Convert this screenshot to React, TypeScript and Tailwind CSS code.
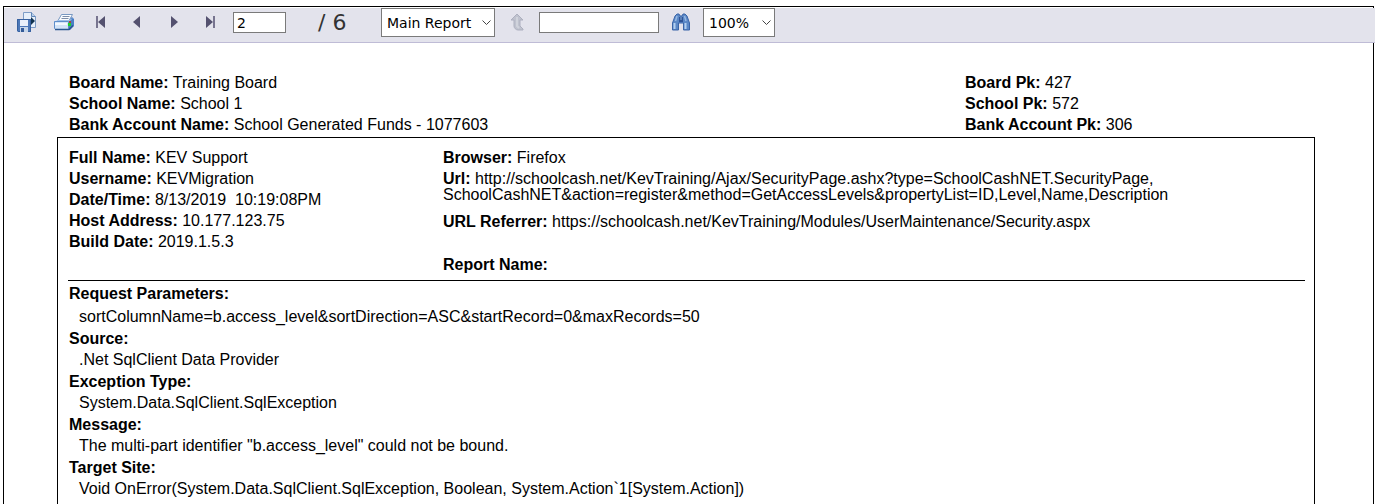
import type { ReactNode } from "react";

const toolbarFont = "font-['Verdana','DejaVu_Sans',sans-serif]";

function SaveIcon() {
  return (
    <svg width="22" height="22" viewBox="0 0 22 22" aria-hidden="true">
      <path d="M7.5 1.5h8l4 4v11h-12z" fill="#e6effa" stroke="#7d9cc6" />
      <path d="M15.500 1.500v4h4" fill="#b9cfe9" stroke="#5f85b8" />
      <path d="M15 6l4 4-4 4z" fill="#10334f" />
      <path d="M11 9h4v2h-4z" fill="#10334f" />
      <path d="M1 8h14v13H2l-1-1z" fill="#4d78b8" />
      <path d="M1.500 8.500h13v12h-12l-1-1z" fill="none" stroke="#36609f" />
      <rect x="4" y="9" width="8" height="6" fill="#e9f0fa" />
      <rect x="4" y="16" width="8" height="5" fill="#c6d6ea" />
      <rect x="5" y="17" width="3" height="4" fill="#345b98" />
    </svg>
  );
}

function PrintIcon() {
  return (
    <svg width="22" height="18" viewBox="0 0 22 18" aria-hidden="true">
      <path d="M14 8l5-4 2 2v7l-4 4h-3z" fill="#4a7fc4" />
      <path d="M8.500 1.500h11l-4 7h-11z" fill="#fbfdff" stroke="#7898c2" />
      <path d="M9.500 3.500h7M8.500 5.500h7" stroke="#7c8da8" />
      <path d="M1 9l4-2h11l4-2-4 4z" fill="#9fc0e8" />
      <path d="M1.500 8.500h14v7l-1 1h-12l-1-1z" fill="#d3e4f8" stroke="#5e8ecb" />
      <path d="M2 10h12v2H2z" fill="#f2f8ff" />
      <path d="M2 16.500h14l4-4" fill="none" stroke="#2a568f" strokeWidth="1.500" />
      <rect x="16" y="8" width="2" height="2" fill="#a3483f" />
      <rect x="15" y="10" width="3" height="3" fill="#1fd02f" />
    </svg>
  );
}

function UpIcon() {
  return (
    <svg width="16" height="18" viewBox="0 0 16 18" aria-hidden="true">
      <path d="M8 1l6 6h-3v6l3 3v1H9c-2 0-4-2-4-4V7H2z" fill="#bfc2ce" stroke="#adb0bf" strokeLinejoin="round" />
      <path d="M8 4v9l2 2" fill="none" stroke="#d0d3dc" strokeWidth="2" />
    </svg>
  );
}

function BinocularsIcon() {
  return (
    <svg width="18" height="18" viewBox="0 0 18 18" aria-hidden="true">
      <path
        d="M3 3l2-2h2l1 2h2l1-2h2l2 2 2.500 7v7H11.500v-7h-5v7H.500v-7z"
        fill="#5b88c6"
        stroke="#3a65a8"
        strokeLinejoin="round"
      />
      <path d="M2.500 10v6M13.500 10v6" stroke="#b3d0f0" strokeWidth="2" />
      <path d="M5 3L3.500 8M12.500 3l1.500 5" stroke="#96b9e4" strokeWidth="1.500" />
      <path d="M7 4h4v5H7z" fill="#2f5496" />
      <path d="M8.500 4h1v3h-1z" fill="#83a9da" />
    </svg>
  );
}

function NavIcon({ arrow, bar }: { arrow: string; bar?: string }) {
  return (
    <svg width="12" height="12" viewBox="0 0 12 12" aria-hidden="true">
      <path d={arrow} fill="#54516f" />
      {bar && <path d={bar} fill="#77748f" />}
    </svg>
  );
}

function ToolButton({ label, children }: { label: string; children: ReactNode }) {
  return (
    <button type="button" aria-label={label} className="flex h-7 w-[37px] items-center justify-center">
      {children}
    </button>
  );
}

function ToolSelect({ label, options, width }: { label: string; options: string[]; width: string }) {
  return (
    <div className={`relative ${width}`}>
      <select
        aria-label={label}
        className="h-[29px] w-full appearance-none border border-[#7a7a7a] bg-white pl-[5px] text-sm text-black"
      >
        {options.map((option) => (
          <option key={option}>{option}</option>
        ))}
      </select>
      <svg
        className="pointer-events-none absolute top-3 right-1"
        width="9"
        height="6"
        viewBox="0 0 9 6"
        fill="none"
        stroke="#444"
        aria-hidden="true"
      >
        <path d="M.5.5l4 4 4-4" />
      </svg>
    </div>
  );
}

function Toolbar() {
  return (
    <div
      className={`mt-px -mr-0.5 flex h-[35px] items-start border-b border-[#bfbcd6] bg-[#e3e3ec] pl-1 ${toolbarFont}`}
    >
      <ToolButton label="Export this report"><SaveIcon /></ToolButton>
      <ToolButton label="Print this report"><PrintIcon /></ToolButton>
      <ToolButton label="First page"><NavIcon arrow="M10 0L3 6l7 6z" bar="M1 0h2v12H1z" /></ToolButton>
      <ToolButton label="Previous page"><NavIcon arrow="M8 0L1 6l7 6z" /></ToolButton>
      <ToolButton label="Next page"><NavIcon arrow="M2 0l7 6-7 6z" /></ToolButton>
      <ToolButton label="Last page"><NavIcon arrow="M0 0l7 6-7 6z" bar="M7 0h2v12H7z" /></ToolButton>
      <input
        aria-label="Page"
        defaultValue="2"
        className="mt-1 ml-[3px] h-[21px] w-[53px] border border-[#7a7a7a] bg-white px-[3px] text-sm text-black"
      />
      <span className="ml-8 w-[63px] text-[22px] leading-[30px] text-[#333]">/ 6</span>
      <ToolSelect label="Report" options={["Main Report"]} width="w-[114px]" />
      <button type="button" aria-label="Parent report" disabled className="flex h-7 w-11 items-center justify-center">
        <UpIcon />
      </button>
      <input aria-label="Find text" className="mt-1 h-[21px] w-[120px] border border-[#7a7a7a] bg-white px-[3px] text-sm" />
      <button type="button" aria-label="Find" className="flex h-7 w-11 items-center justify-center">
        <BinocularsIcon />
      </button>
      <ToolSelect label="Zoom" options={["100%"]} width="w-[72px]" />
    </div>
  );
}

function Field({ label, children }: { label: string; children?: ReactNode }) {
  return (
    <p className="whitespace-pre-wrap">
      <b>{label}:</b> {children}
    </p>
  );
}

const sections = [
  { title: "Source", text: ".Net SqlClient Data Provider" },
  { title: "Exception Type", text: "System.Data.SqlClient.SqlException" },
  { title: "Message", text: 'The multi-part identifier "b.access_level" could not be bound.' },
  { title: "Target Site", text: "Void OnError(System.Data.SqlClient.SqlException, Boolean, System.Action`1[System.Action])" },
];

export default function App() {
  return (
    <div className="flex min-h-screen bg-white pt-1.5 pr-2 pl-[3px] font-['Liberation_Sans',Arial,sans-serif] text-base text-black">
      <div className="flex min-w-0 flex-1 flex-col border border-b-0 border-black">
        <Toolbar />

        <main className="flex flex-1 flex-col pt-[29px] pr-[58px] pl-[53px] leading-[21px]">
          {/* Board / school */}
          <div className="flex pb-0.5 pl-3">
            <div className="flex-1">
              <Field label="Board Name">Training Board</Field>
              <Field label="School Name">School 1</Field>
              <Field label="Bank Account Name">School Generated Funds - 1077603</Field>
            </div>
            <div className="w-[350px]">
              <Field label="Board Pk">427</Field>
              <Field label="School Pk">572</Field>
              <Field label="Bank Account Pk">306</Field>
            </div>
          </div>

          <section className="flex-1 border border-b-0 border-black pr-[9px] pl-[10px]">
            {/* Request info */}
            <div className="flex border-b border-black pt-[9px] pb-[5px] pl-px">
              <div className="w-[374px]">
                <Field label="Full Name">KEV Support</Field>
                <Field label="Username">KEVMigration</Field>
                <Field label="Date/Time">{"8/13/2019  10:19:08PM"}</Field>
                <Field label="Host Address">10.177.123.75</Field>
                <Field label="Build Date">2019.1.5.3</Field>
              </div>
              <div className="flex-1">
                <Field label="Browser">Firefox</Field>
                <div className="pt-[3px] pb-2 leading-4">
                  <Field label="Url">
                    http://schoolcash.net/KevTraining/Ajax/SecurityPage.ashx?type=SchoolCashNET.SecurityPage,
                    <br />
                    SchoolCashNET&amp;action=register&amp;method=GetAccessLevels&amp;propertyList=ID,Level,Name,Description
                  </Field>
                </div>
                <Field label="URL Referrer">https://schoolcash.net/KevTraining/Modules/UserMaintenance/Security.aspx</Field>
                <div className="pt-[22px]">
                  <Field label="Report Name" />
                </div>
              </div>
            </div>

            {/* Error details */}
            <dl className="pt-0.5 pl-px">
              <dt className="font-bold">Request Parameters:</dt>
              <dd className="pt-0.5 pb-px pl-[10px]">
                sortColumnName=b.access_level&amp;sortDirection=ASC&amp;startRecord=0&amp;maxRecords=50
              </dd>
              {sections.map((s) => (
                <div key={s.title} className="pb-px">
                  <dt className="font-bold">{s.title}:</dt>
                  <dd className="pl-[10px]">{s.text}</dd>
                </div>
              ))}
            </dl>
          </section>
        </main>
      </div>
    </div>
  );
}
